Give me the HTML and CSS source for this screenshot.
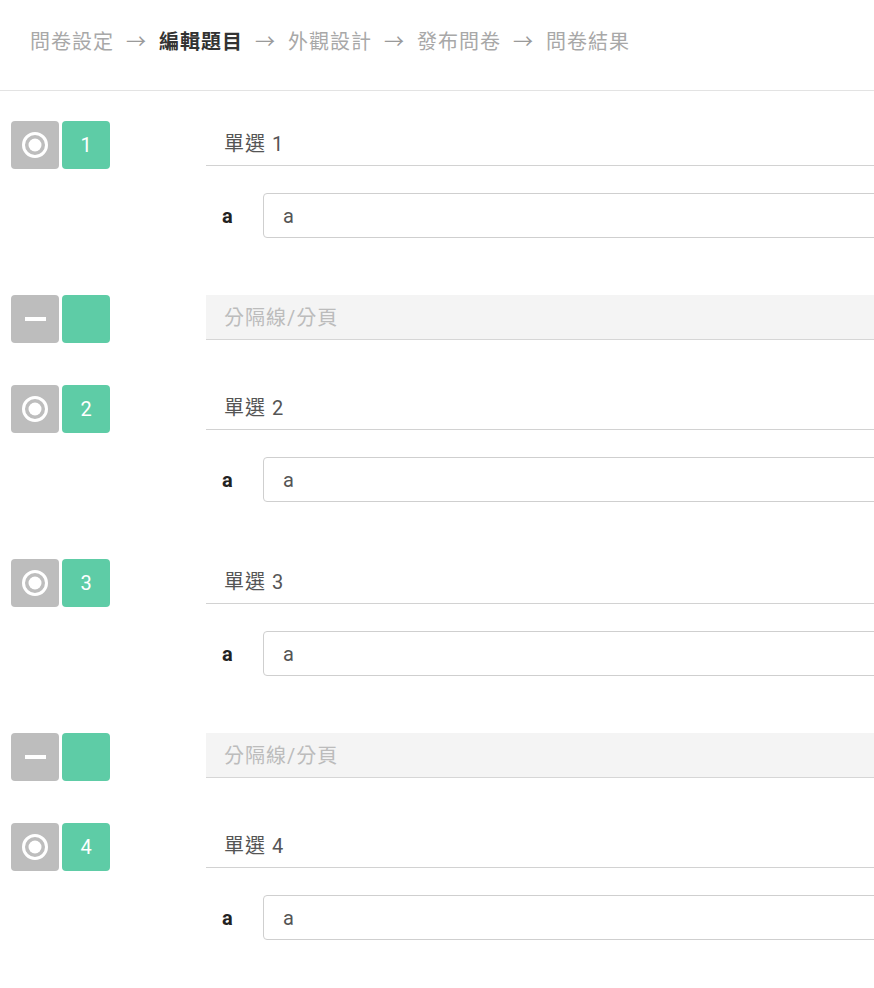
FILE: index.html
```html
<!DOCTYPE html>
<html lang="zh-Hant">
<head>
<meta charset="utf-8">
<title>編輯題目</title>
<link rel="stylesheet" href="styles.css">
</head>
<body>
<header class="steps">
  <span class="step">問卷設定</span><span class="arrow">→</span>
  <span class="step active">編輯題目</span><span class="arrow">→</span>
  <span class="step">外觀設計</span><span class="arrow">→</span>
  <span class="step">發布問卷</span><span class="arrow">→</span>
  <span class="step">問卷結果</span>
</header>

<main class="list">
  <section class="block question">
    <div class="tools">
      <span class="tool type"><svg class="radio" viewBox="0 0 26 26"><circle cx="13" cy="13" r="11.5" fill="none" stroke="#fff" stroke-width="3"/><circle cx="13" cy="13" r="6.5" fill="#fff"/></svg></span>
      <span class="tool num">1</span>
    </div>
    <div class="body">
      <div class="title">單選 1</div>
      <div class="option"><span class="opt-label">a</span><div class="opt-input">a</div></div>
    </div>
  </section>

  <section class="block divider">
    <div class="tools">
      <span class="tool type"><span class="bar"></span></span>
      <span class="tool num"></span>
    </div>
    <div class="body">
      <div class="sep">分隔線/分頁</div>
    </div>
  </section>

  <section class="block question">
    <div class="tools">
      <span class="tool type"><svg class="radio" viewBox="0 0 26 26"><circle cx="13" cy="13" r="11.5" fill="none" stroke="#fff" stroke-width="3"/><circle cx="13" cy="13" r="6.5" fill="#fff"/></svg></span>
      <span class="tool num">2</span>
    </div>
    <div class="body">
      <div class="title">單選 2</div>
      <div class="option"><span class="opt-label">a</span><div class="opt-input">a</div></div>
    </div>
  </section>

  <section class="block question">
    <div class="tools">
      <span class="tool type"><svg class="radio" viewBox="0 0 26 26"><circle cx="13" cy="13" r="11.5" fill="none" stroke="#fff" stroke-width="3"/><circle cx="13" cy="13" r="6.5" fill="#fff"/></svg></span>
      <span class="tool num">3</span>
    </div>
    <div class="body">
      <div class="title">單選 3</div>
      <div class="option"><span class="opt-label">a</span><div class="opt-input">a</div></div>
    </div>
  </section>

  <section class="block divider">
    <div class="tools">
      <span class="tool type"><span class="bar"></span></span>
      <span class="tool num"></span>
    </div>
    <div class="body">
      <div class="sep">分隔線/分頁</div>
    </div>
  </section>

  <section class="block question">
    <div class="tools">
      <span class="tool type"><svg class="radio" viewBox="0 0 26 26"><circle cx="13" cy="13" r="11.5" fill="none" stroke="#fff" stroke-width="3"/><circle cx="13" cy="13" r="6.5" fill="#fff"/></svg></span>
      <span class="tool num">4</span>
    </div>
    <div class="body">
      <div class="title">單選 4</div>
      <div class="option"><span class="opt-label">a</span><div class="opt-input">a</div></div>
    </div>
  </section>
</main>
</body>
</html>
```

FILE: styles.css
```css
html, body {
  margin: 0;
  padding: 0;
  background: #fff;
  overflow: hidden;
}
body {
  font-family: Roboto, "Noto Sans CJK TC", sans-serif;
  color: #555;
}
.steps {
  display: flex;
  align-items: center;
  gap: 13px;
  padding: 26px 30px 32px;
  line-height: 32px;
  font-size: 20px;
  color: #a8a8a8;
  border-bottom: 1px solid #e3e3e3;
}
.step {
  letter-spacing: 1px;
  margin-right: -1px;
}
.step.active {
  color: #333;
  font-weight: 700;
}
.arrow {
  color: #9a9a9a;
}
.list {
  padding-top: 30px;
}
.block {
  display: flex;
  align-items: flex-start;
}
.block.question {
  margin-bottom: 57px;
}
.block.divider {
  margin-bottom: 42px;
}
.tools {
  width: 195px;
  padding-left: 11px;
  display: flex;
  gap: 3px;
}
.tool {
  width: 48px;
  height: 48px;
  border-radius: 4px;
  display: flex;
  align-items: center;
  justify-content: center;
  color: #fff;
  font-size: 20px;
}
.tool.type {
  background: #bdbdbd;
}
.tool.num {
  background: #5ecca6;
}
.radio {
  width: 26px;
  height: 26px;
}
.bar {
  width: 21px;
  height: 4px;
  background: #fff;
}
.body {
  flex: 1;
  margin-right: -30px;
}
.title {
  height: 44px;
  line-height: 46px;
  padding-left: 18px;
  font-size: 20px;
  letter-spacing: 1px;
  color: #555;
  border-bottom: 1px solid #d2d2d2;
}
.option {
  display: flex;
  align-items: center;
  margin-top: 27px;
}
.opt-label {
  width: 41px;
  padding-left: 16px;
  font-size: 20px;
  font-weight: 700;
  color: #222;
}
.opt-input {
  flex: 1;
  height: 43px;
  line-height: 45px;
  padding-left: 19px;
  border: 1px solid #cfcfcf;
  border-radius: 4px;
  font-size: 20px;
  color: #555;
}
.sep {
  height: 44px;
  line-height: 46px;
  padding-left: 18px;
  font-size: 20px;
  letter-spacing: 1px;
  color: #bcbcbc;
  background: #f4f4f4;
  border-bottom: 1px solid #d6d6d6;
}
```
